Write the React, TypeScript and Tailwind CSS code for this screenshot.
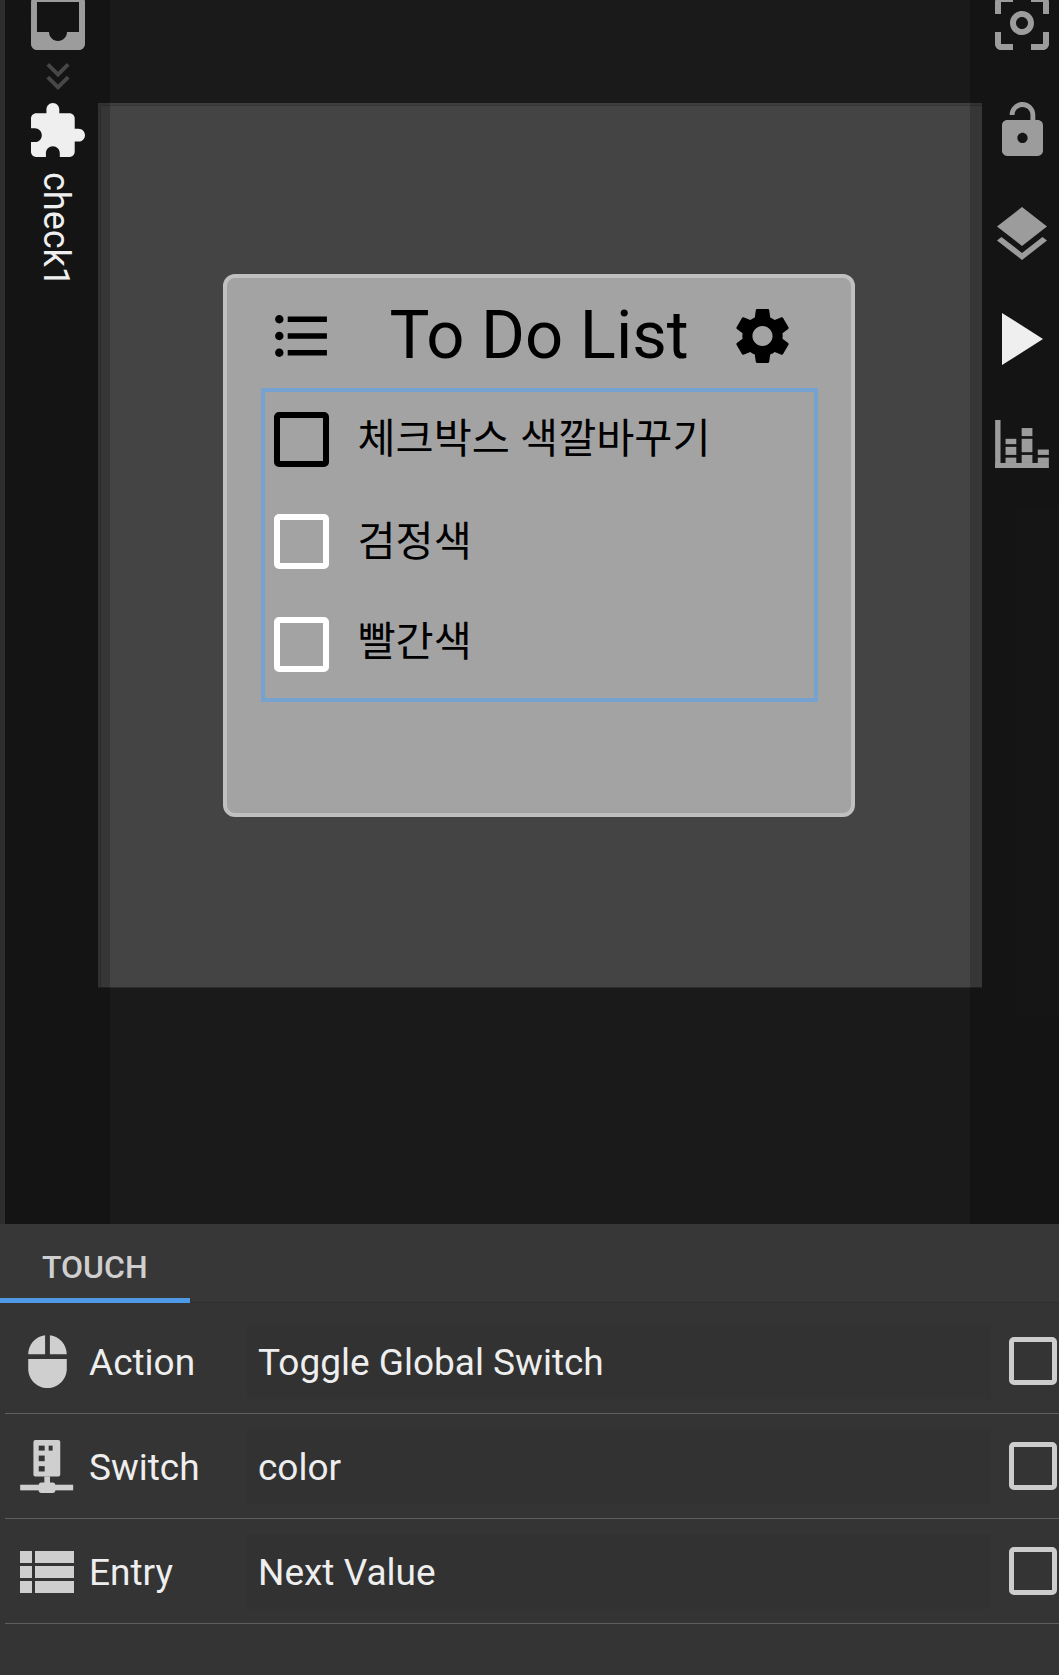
const FONT = "font-['Roboto','Noto_Sans_CJK_KR',sans-serif]";

function Icon({ d, box = "0 0 24 24", className }: { d: string; box?: string; className: string }) {
  return (
    <svg viewBox={box} fill="currentColor" fillRule="evenodd" className={`shrink-0 ${className}`}>
      <path d={d} />
    </svg>
  );
}

const paths = {
  inbox: "M19 3H4.99c-1.11 0-1.98.89-1.98 2L3 19c0 1.1.88 2 1.99 2H19c1.1 0 2-.9 2-2V5c0-1.11-.9-2-2-2zm0 12h-4c0 1.66-1.35 3-3 3s-3-1.34-3-3H4.99V5H19v10z",
  chevrons: "M18 6.41 16.59 5 12 9.58 7.41 5 6 6.41l6 6zM18 13l-1.41-1.41L12 16.17l-4.59-4.58L6 13l6 6z",
  puzzle: "M20.5 11H19V7c0-1.1-.9-2-2-2h-4V3.5C13 2.12 11.88 1 10.5 1S8 2.12 8 3.5V5H4c-1.1 0-1.99.9-1.99 2v3.8H3.5c1.49 0 2.7 1.21 2.7 2.7s-1.21 2.7-2.7 2.7H2V20c0 1.1.9 2 2 2h3.8v-1.5c0-1.49 1.21-2.7 2.7-2.7 1.49 0 2.7 1.21 2.7 2.7V22H17c1.1 0 2-.9 2-2v-4h1.5c1.38 0 2.5-1.12 2.5-2.5S21.88 11 20.5 11z",
  focus: "M5 15H3v4c0 1.1.9 2 2 2h4v-2H5v-4zM5 5h4V3H5c-1.1 0-2 .9-2 2v4h2V5zm14-2h-4v2h4v4h2V5c0-1.1-.9-2-2-2zm0 16h-4v2h4c1.1 0 2-.9 2-2v-4h-2v4zM12 8c-2.21 0-4 1.79-4 4s1.79 4 4 4 4-1.79 4-4-1.79-4-4-4zm0 6c-1.1 0-2-.9-2-2s.9-2 2-2 2 .9 2 2-.9 2-2 2z",
  lock: "M18 8h-1V6c0-2.76-2.24-5-5-5S7 3.24 7 6h1.9c0-1.71 1.39-3.1 3.1-3.1 1.71 0 3.1 1.39 3.1 3.1v2H6c-1.1 0-2 .9-2 2v10c0 1.1.9 2 2 2h12c1.1 0 2-.9 2-2V10c0-1.1-.9-2-2-2zm-6 9c-1.1 0-2-.9-2-2s.9-2 2-2 2 .9 2 2-.9 2-2 2z",
  layers: "M11.99 18.54l-7.37-5.73L3 14.07l9 7 9-7-1.63-1.27-7.38 5.74zM12 16l7.36-5.73L21 9l-9-7-9 7 1.63 1.27L12 16z",
  gear: "M19.14 12.94c.04-.3.06-.61.06-.94 0-.32-.02-.64-.07-.94l2.03-1.58c.18-.14.23-.41.12-.61l-1.92-3.32c-.12-.22-.37-.29-.59-.22l-2.39.96c-.5-.38-1.03-.7-1.62-.94l-.36-2.54c-.04-.24-.24-.41-.48-.41h-3.84c-.24 0-.43.17-.47.41l-.36 2.54c-.59.24-1.13.57-1.62.94l-2.39-.96c-.22-.08-.47 0-.59.22L2.74 8.87c-.12.21-.08.47.12.61l2.03 1.58c-.05.3-.09.63-.09.94s.02.64.07.94l-2.03 1.58c-.18.14-.23.41-.12.61l1.92 3.32c.12.22.37.29.59.22l2.39-.96c.5.38 1.03.7 1.62.94l.36 2.54c.05.24.24.41.48.41h3.84c.24 0 .44-.17.47-.41l.36-2.54c.59-.24 1.13-.56 1.62-.94l2.39.96c.22.08.47 0 .59-.22l1.92-3.32c.12-.22.07-.47-.12-.61l-2.01-1.58zM12 15.6c-1.98 0-3.6-1.62-3.6-3.6s1.62-3.6 3.6-3.6 3.6 1.62 3.6 3.6-1.62 3.6-3.6 3.6z",
  list: "M4 10.5c-.83 0-1.5.67-1.5 1.5s.67 1.5 1.5 1.5 1.5-.67 1.5-1.5-.67-1.5-1.5-1.5zm0-6c-.83 0-1.5.67-1.5 1.5S3.17 7.5 4 7.5 5.5 6.83 5.5 6 4.83 4.5 4 4.5zm0 12c-.83 0-1.5.68-1.5 1.5s.68 1.5 1.5 1.5 1.5-.68 1.5-1.5-.67-1.5-1.5-1.5zM7 19h14v-2H7v2zm0-6h14v-2H7v2zm0-8v2h14V5H7z",
  mouse: "M13 1.07V9h7c0-4.08-3.05-7.44-7-7.93zM4 15c0 4.42 3.58 8 8 8s8-3.58 8-8v-4H4v4zm7-13.93C7.05 1.56 4 4.92 4 9h7V1.07z",
  table: "M3 14h4v-4H3v4zm0 5h4v-4H3v4zM3 9h4V5H3v4zm5 5h13v-4H8v4zm0 5h13v-4H8v4zM8 5v4h13V5H8z",
};

function ChartIcon() {
  return (
    <svg viewBox="0 0 160 143" fill="currentColor" className="w-[54px] h-[48px] shrink-0">
      <rect x="0" y="0" width="16" height="143" />
      <rect x="0" y="128" width="160" height="15" />
      <rect x="31" y="56" width="32" height="16" />
      <rect x="31" y="80" width="32" height="24" />
      <rect x="31" y="112" width="32" height="16" />
      <rect x="79" y="24" width="32" height="24" />
      <rect x="79" y="56" width="32" height="40" />
      <rect x="79" y="104" width="32" height="24" />
      <rect x="127" y="88" width="33" height="16" />
      <rect x="127" y="112" width="33" height="16" />
    </svg>
  );
}

function SwitchIcon() {
  return (
    <svg viewBox="0 0 162 160" className="w-[54px] h-[53px] shrink-0">
      <rect x="40" y="0" width="81" height="110" rx="6" fill="#cfcfcf" />
      <rect x="56" y="17" width="18" height="15" fill="#343434" />
      <rect x="86" y="17" width="12" height="15" fill="#343434" />
      <rect x="56" y="47" width="18" height="17" fill="#343434" />
      <rect x="56" y="79" width="18" height="16" fill="#343434" />
      <rect x="73" y="110" width="17" height="22" fill="#cfcfcf" />
      <rect x="0" y="135" width="160" height="17" fill="#cfcfcf" />
      <rect x="56" y="128" width="50" height="32" rx="8" fill="#cfcfcf" />
    </svg>
  );
}

const todos = [
  { label: "체크박스 색깔바꾸기", box: "border-black", nudge: "translate-y-[1px]" },
  { label: "검정색", box: "border-white", nudge: "translate-y-[1px]" },
  { label: "빨간색", box: "border-white", nudge: "-translate-y-[1px]" },
];

function TodoCard() {
  return (
    <div className="w-[632px] h-[543px] rounded-[12px] border-[4px] border-[#c0c0c0] bg-[#a3a3a3] flex flex-col items-center text-black">
      <div className="w-[557px] h-[72px] mt-[22px] mb-[16px] flex items-center">
        <Icon d={paths.list} box="2.5 4.5 18.5 15" className="w-[52px] h-[42px] ml-[14px]" />
        <span className="ml-[63px] text-[67px] leading-none whitespace-nowrap">To Do List</span>
        <Icon d={paths.gear} box="2.6 2 18.8 20" className="w-[55px] h-[56px] ml-[46px]" />
      </div>
      <div className="w-[557px] h-[314px] border-4 border-[#76a2d2] pt-[20px] pl-[9px] flex flex-col gap-[47.5px]">
        {todos.map((t) => (
          <div key={t.label} className="flex items-center h-[55px]">
            <span className={`w-[55px] h-[55px] rounded-[5px] border-[6px] shrink-0 ${t.box}`} />
            <span className={`ml-[29px] text-[41.4px] leading-none whitespace-nowrap ${t.nudge}`}>{t.label}</span>
          </div>
        ))}
      </div>
    </div>
  );
}

const rows = [
  { label: "Action", value: "Toggle Global Switch", icon: <Icon d={paths.mouse} box="4 1 16 22" className="w-[39px] h-[53px]" /> },
  { label: "Switch", value: "color", icon: <SwitchIcon /> },
  { label: "Entry", value: "Next Value", icon: <Icon d={paths.table} box="3 5 18 14" className="w-[54px] h-[44px]" /> },
];

export default function App() {
  return (
    <div className={`w-[1059px] h-[1675px] overflow-hidden bg-[#343434] ${FONT}`}>
      <div className="relative h-[1224px] overflow-hidden bg-[#1a1a1a] pl-[98px] pt-[103px]">
        <div className="w-[884px] h-[885px] pl-[2px] pt-[2px] bg-[#3e3e3e] border-b border-[#2b2b2b]">
          <div className="w-full h-full pr-[5px] pb-[3px] flex items-center justify-center bg-[#444444] border-l border-t border-[#363636]">
            <TodoCard />
          </div>
        </div>

        <div className="absolute left-0 top-0 bottom-0 w-[5px] bg-[#2e2e2e]" />

        <aside className="absolute left-[5px] top-0 bottom-0 w-[105px] bg-black/20 flex flex-col items-center">
          <Icon d={paths.inbox} className="w-[72px] h-[72px] -mt-[13px] text-[#9c9c9c]" />
          <Icon d={paths.chevrons} box="6 5 12 14" className="w-[24px] h-[27px] mt-[4px] text-[#474747]" />
          <Icon d={paths.puzzle} box="2 1 21 21" className="w-[54px] h-[54px] mt-[13px] text-[#efefef]" />
          <span className="mt-[15px] mr-[4px] text-[36px] leading-none text-[#efefef] [writing-mode:vertical-rl]">check1</span>
        </aside>

        <aside className="absolute right-0 top-0 bottom-0 w-[89px] pl-[15px] bg-black/20 flex flex-col items-center text-[#9c9c9c]">
          <Icon d={paths.focus} className="w-[72px] h-[72px] -mt-[13px]" />
          <Icon d={paths.lock} box="4 1 16 21" className="w-[41px] h-[54px] mt-[43px]" />
          <Icon d={paths.layers} box="3 2 18 19.07" className="w-[50px] h-[53px] mt-[51px]" />
          <Icon d="M8 5v14l11-7z" box="8 5 11 14" className="w-[41px] h-[54px] mt-[52px] text-[#efefef]" />
          <div className="mt-[54px]">
            <ChartIcon />
          </div>
        </aside>
      </div>

      <div className="h-[79px] bg-[#373737] border-b border-[#2f2f2f] flex">
        <div className="w-[190px] h-[79px] border-b-[5px] border-[#4f9ae6] pl-[42px] flex items-center">
          <span className="text-[32px] leading-none font-medium text-[#cfcfcf] mt-[12px]">TOUCH</span>
        </div>
      </div>

      <div className="pl-[5px] pt-[6px]">
        {rows.map((r) => (
          <div key={r.label} className="h-[105px] pt-[15px] border-b border-[#5f5f5f] flex items-start">
            <div className="w-[84px] h-[75px] flex items-center justify-center text-[#cfcfcf]">{r.icon}</div>
            <div className="w-[158px] h-[75px] pt-[2px] flex items-center text-[37px] leading-none text-[#eeeeee]">{r.label}</div>
            <div className="w-[744px] h-[75px] pt-[2px] pl-[11px] bg-[#323232] flex items-center text-[37px] leading-none text-[#eeeeee]">{r.value}</div>
            <div className="ml-[18px] h-[75px] pb-[2px] flex items-center">
              <span className="w-[48px] h-[48px] rounded-[5px] border-[5px] border-[#cdcdcd]" />
            </div>
          </div>
        ))}
      </div>
    </div>
  );
}
